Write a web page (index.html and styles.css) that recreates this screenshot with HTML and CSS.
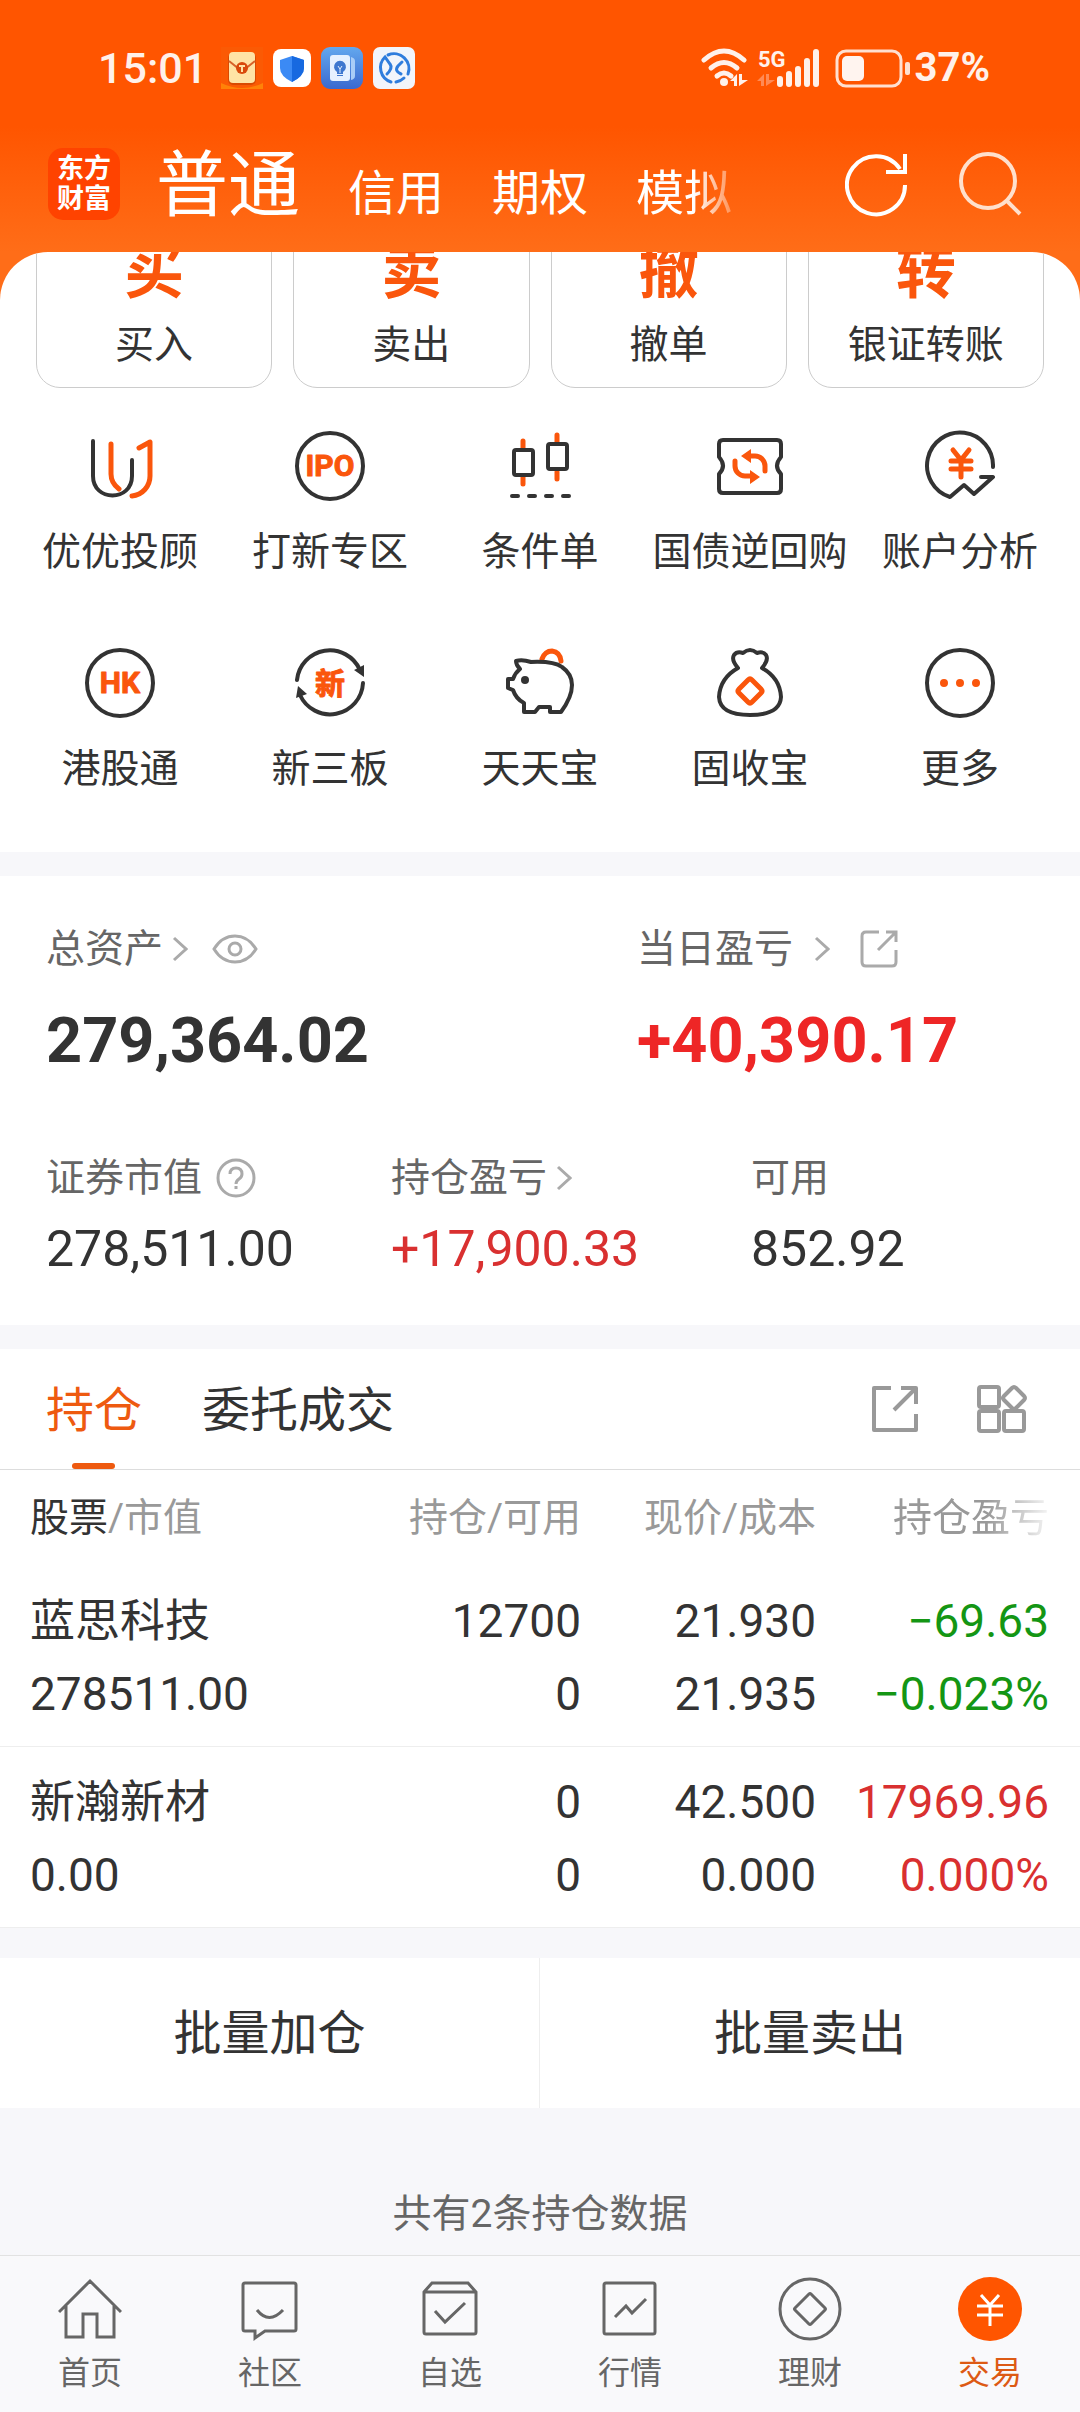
FILE: index.html
```html
<!DOCTYPE html>
<html lang="zh-CN">
<head>
    <meta charset="UTF-8">
    <meta name="viewport" content="width=device-width, initial-scale=1">
    <title>交易 - 普通账户</title>
    <link rel="stylesheet" href="styles.css">
</head>
<body>

    <!-- 状态栏 + 顶部导航 -->
    <header class="top">
        <div class="status-bar">
            <span class="time">15:01</span>
            <div class="status-apps">
                <svg width="42" height="42" viewBox="0 0 42 42">
                    <rect width="42" height="42" fill="#fb5a04"/>
                    <path d="M0 42V36Q21 46 42 36V42z" fill="#ff8208"/>
                    <rect x="7" y="6" width="28" height="32" rx="5" fill="#d94a02"/>
                    <rect x="8" y="5" width="26" height="31" rx="4" fill="#ffe3a5"/>
                    <path d="M8 14l10 8h6l10-8" fill="none" stroke="#d8622a" stroke-width="2"/>
                    <circle cx="21" cy="21" r="6" fill="#d94a0c"/>
                    <path d="M18 19h6M21 19v6" stroke="#ffe3a5" stroke-width="2"/>
                </svg>
                <svg width="38" height="38" viewBox="0 0 38 38">
                    <rect width="38" height="38" rx="8" fill="#fff"/>
                    <path d="M19 7l12 4v8q0 8-12 14Q7 27 7 19v-8z" fill="#3b8af5"/>
                    <path d="M19 7l12 4v8q0 8-12 14z" fill="#1769e0"/>
                </svg>
                <svg width="42" height="42" viewBox="0 0 42 42">
                    <defs>
                        <linearGradient id="bulb" x1="0" y1="0" x2="0" y2="1">
                            <stop offset="0" stop-color="#63a8ee"/>
                            <stop offset="1" stop-color="#3a69cf"/>
                        </linearGradient>
                    </defs>
                    <rect width="42" height="42" rx="9" fill="url(#bulb)"/>
                    <path d="M30 10q4 1 4 4v15q0 3-4 4z" fill="#a9cdf7"/>
                    <rect x="9" y="8" width="20" height="26" rx="3" fill="#e6f1ff"/>
                    <path d="M16 25a6 6 0 1 1 6 0v2h-6zM16 28h6v1h-6z" fill="#3f78cf"/>
                    <path d="M17 19l2 3 2-3M19 22v4" fill="none" stroke="#e6f1ff" stroke-width="1"/>
                </svg>
                <svg width="42" height="42" viewBox="0 0 42 42">
                    <rect width="42" height="42" rx="7" fill="#f2f5fb"/>
                    <path d="M15 8a15 15 0 0 1 20 19M31 31a15 15 0 0 1-8 4M18 35A15 15 0 0 1 12 10l5 7q3 4-3 10" fill="none" stroke="#2f7ddd" stroke-width="3" stroke-linecap="round"/>
                    <path d="M29 15l-4 4q-4 5 3 8" fill="none" stroke="#2f7ddd" stroke-width="3" stroke-linecap="round"/>
                </svg>
            </div>
            <div class="status-right">
                <svg width="120" height="40" viewBox="0 0 120 40" fill="none" stroke="#fff1ea" stroke-linecap="round">
                    <path d="M3 12q20-18 40 0" stroke-width="5"/>
                    <path d="M10 20q13-11 26 0" stroke-width="5"/>
                    <path d="M16 28q7-6 14 0" stroke-width="5"/>
                    <circle cx="23" cy="34" r="4" fill="#fff1ea" stroke="none"/>
                    <path d="M29 33l7-7v12h-3v-5zM38 38V26h3v6h6z" fill="#fff1ea" stroke="none"/>
                    <path d="M56 33l7-7v12h-3v-5zM65 38V26h3v6h6z" fill="#ff8a55" stroke="none"/>
                    <text class="net" x="57" y="19">5G</text>
                    <path d="M79 31v5M88 26v10M97 21v15M106 13v23M115 4v32" stroke-width="6"/>
                </svg>
                <svg class="battery" width="76" height="40" viewBox="0 0 76 40">
                    <rect x="2" y="3" width="64" height="35" rx="9" fill="none" stroke="#ffe0d0" stroke-width="3"/>
                    <rect x="7" y="8" width="22" height="25" rx="5" fill="#fff4ef"/>
                    <rect x="70" y="14" width="5" height="13" rx="2" fill="#ffe0d0"/>
                </svg>
                <span class="percent">37%</span>
            </div>
        </div>
        <div class="title-bar">
            <div class="logo">东方<br>财富</div>
            <nav class="account-tabs">
                <button class="account-tab current">普通</button>
                <button class="account-tab">信用</button>
                <button class="account-tab">期权</button>
                <button class="account-tab fade">模拟</button>
            </nav>
            <div class="title-tools">
                <button aria-label="刷新">
                    <svg width="64" height="66" viewBox="0 0 64 66" fill="none" stroke="#fff" stroke-width="4">
                        <path d="M60 34A29 29 0 1 1 55 18"/>
                        <path d="M60 3V21H41"/>
                    </svg>
                </button>
                <button aria-label="搜索">
                    <svg width="64" height="66" viewBox="0 0 64 66" fill="none" stroke="#ffe0cc" stroke-width="4">
                        <circle cx="30" cy="30" r="27"/>
                        <path d="M48 49l14 14"/>
                    </svg>
                </button>
            </div>
        </div>
    </header>

    <main>
        <!-- 快捷入口 -->
        <div class="panel-wrap">
            <section class="panel">
                <div class="cards">
                    <a href="#" class="card"><b>买</b><span>买入</span></a>
                    <a href="#" class="card"><b>卖</b><span>卖出</span></a>
                    <a href="#" class="card"><b>撤</b><span>撤单</span></a>
                    <a href="#" class="card"><b>转</b><span>银证转账</span></a>
                </div>
                <div class="functions">
                    <a href="#" class="function">
                        <svg class="icon" viewBox="0 0 72 72">
                            <path d="M9 11V46C9 72 48 72 48 46V30"/>
                            <path class="hot" d="M27 14V44q0 9 8 15M55 18L66 12V46a20 20 0 0 1-18 20"/>
                        </svg>
                        <span>优优投顾</span>
                    </a>
                    <a href="#" class="function">
                        <svg class="icon" viewBox="0 0 72 72">
                            <circle cx="36" cy="36" r="33"/>
                            <text x="36" y="46">IPO</text>
                        </svg>
                        <span>打新专区</span>
                    </a>
                    <a href="#" class="function">
                        <svg class="icon" viewBox="0 0 72 72">
                            <path class="hot" d="M19 11v7M19 47v7M53 5v7M53 42v7"/>
                            <rect x="10" y="20" width="19" height="25" rx="2"/>
                            <rect x="44" y="14" width="19" height="25" rx="2"/>
                            <path d="M8 66h6M25 66h6M42 66h6M59 66h6"/>
                        </svg>
                        <span>条件单</span>
                    </a>
                    <a href="#" class="function">
                        <svg class="icon" viewBox="0 0 72 72">
                            <path d="M9 10H63q4 0 4 4V27q-8 9 0 17V59q0 4-4 4H9q-4 0-4-4V44q8-8 0-17V14q0-4 4-4z"/>
                            <path class="hot" d="M35 26H41a10 10 0 0 1 10 10V41M21 31V36a10 10 0 0 0 10 10H37"/>
                            <path class="fill-hot" d="M27 26l10-7v14zM46 47l-10-7v14z"/>
                        </svg>
                        <span>国债逆回购</span>
                    </a>
                    <a href="#" class="function">
                        <svg class="icon" viewBox="0 0 72 72">
                            <path d="M69 37A33 33 0 1 0 26 67L40 55L50 64L69 47H57"/>
                            <path class="hot" d="M29 20l8 10 8-10M37 30V47M27 31H47M27 39H47"/>
                        </svg>
                        <span>账户分析</span>
                    </a>
                    <a href="#" class="function">
                        <svg class="icon" viewBox="0 0 72 72">
                            <circle cx="36" cy="36" r="33"/>
                            <text x="36" y="46">HK</text>
                        </svg>
                        <span>港股通</span>
                    </a>
                    <a href="#" class="function">
                        <svg class="icon" viewBox="0 0 72 72">
                            <path d="M3 33A33 33 0 0 1 66 23M69 36A33 33 0 0 1 6 48"/>
                            <path class="fill-dark" d="M60 23l10-5v12zM2 51l2-12 9 8z"/>
                            <text x="36" y="47">新</text>
                        </svg>
                        <span>新三板</span>
                    </a>
                    <a href="#" class="function">
                        <svg class="icon" viewBox="0 0 72 72">
                            <path class="hot" d="M38 12q3-8 10-8 8 1 9 10"/>
                            <path d="M12 14Q18 12 27 15Q50 14 58 20Q68 27 68 38Q68 50 57 65H46V60H35L31 65H20V56Q12 52 9 43L4 41V32H9Q11 26 16 22Q12 18 12 14z"/>
                            <circle class="fill-dark" cx="21" cy="33" r="4"/>
                        </svg>
                        <span>天天宝</span>
                    </a>
                    <a href="#" class="function">
                        <svg class="icon" viewBox="0 0 72 72">
                            <path d="M24 21Q17 13 20 8Q23 4 29 6Q36 0 43 6Q49 4 52 8Q55 13 48 21Q66 31 67 50Q66 68 36 68T5 50Q6 31 24 21z"/>
                            <path class="hot" d="M34 33q2-2 4 0l9 9q2 2 0 4l-9 9q-2 2-4 0l-9-9q-2-2 0-4z"/>
                        </svg>
                        <span>固收宝</span>
                    </a>
                    <a href="#" class="function">
                        <svg class="icon" viewBox="0 0 72 72">
                            <circle cx="36" cy="36" r="33"/>
                            <path class="fill-hot" d="M16 36a4 4 0 1 0 8 0a4 4 0 1 0-8 0M32 36a4 4 0 1 0 8 0a4 4 0 1 0-8 0M48 36a4 4 0 1 0 8 0a4 4 0 1 0-8 0"/>
                        </svg>
                        <span>更多</span>
                    </a>
                </div>
            </section>
        </div>

        <!-- 资产 -->
        <section class="assets">
            <div class="assets-main">
                <div>
                    <div class="label">总资产
                        <svg class="chevron" viewBox="0 0 16 26"><path d="M2 2l12 11L2 24"/></svg>
                        <svg class="eye" viewBox="0 0 46 32"><path d="M2 16Q10 3 23 3T44 16Q36 29 23 29T2 16z"/><circle cx="23" cy="16" r="6"/></svg>
                    </div>
                    <div class="total">279,364.02</div>
                </div>
                <div>
                    <div class="label">当日盈亏
                        <svg class="chevron far" viewBox="0 0 16 26"><path d="M2 2l12 11L2 24"/></svg>
                        <svg class="share" viewBox="0 0 40 40"><path d="M20 3H7Q3 3 3 7V33Q3 37 7 37H33Q37 37 37 33V21M27 3H37V13M37 3L19 21"/></svg>
                    </div>
                    <div class="total up-bold">+40,390.17</div>
                </div>
            </div>
            <div class="assets-sub">
                <div>
                    <div class="label">证券市值
                        <svg class="help" viewBox="0 0 40 40"><circle cx="20" cy="20" r="18"/><path d="M14 16q0-6 6-6t6 6q0 3-3 5t-3 5M20 28v3"/></svg>
                    </div>
                    <div class="amount">278,511.00</div>
                </div>
                <div>
                    <div class="label">持仓盈亏
                        <svg class="chevron" viewBox="0 0 16 26"><path d="M2 2l12 11L2 24"/></svg>
                    </div>
                    <div class="amount up">+17,900.33</div>
                </div>
                <div>
                    <div class="label">可用</div>
                    <div class="amount">852.92</div>
                </div>
            </div>
        </section>

        <!-- 持仓列表 -->
        <section class="holdings">
            <div class="holding-tabs">
                <button class="holding-tab active">持仓</button>
                <button class="holding-tab">委托成交</button>
                <div class="holding-tools">
                    <button aria-label="分享">
                        <svg width="48" height="48" viewBox="0 0 48 48"><path d="M20 3H3V45H45V29M30 3H45V19M45 3L23 25"/></svg>
                    </button>
                    <button aria-label="布局">
                        <svg width="52" height="50" viewBox="0 0 52 50">
                            <rect x="3" y="3" width="20" height="20" rx="2"/>
                            <rect x="3" y="27" width="20" height="20" rx="2"/>
                            <rect x="28" y="27" width="20" height="20" rx="2"/>
                            <path d="M36 4q2-2 4 0l8 8q2 2 0 4l-8 8q-2 2-4 0l-8-8q-2-2 0-4z"/>
                        </svg>
                    </button>
                </div>
            </div>
            <table>
                <colgroup>
                    <col>
                    <col class="col-count">
                    <col class="col-price">
                    <col class="col-profit">
                </colgroup>
                <thead>
                    <tr>
                        <th><b>股票</b>/市值</th>
                        <th>持仓/可用</th>
                        <th>现价/成本</th>
                        <th><span class="fade-head">持仓盈亏</span></th>
                    </tr>
                </thead>
                <tbody>
                    <tr>
                        <td><span class="stock">蓝思科技</span><br>278511.00</td>
                        <td>12700<br>0</td>
                        <td>21.930<br>21.935</td>
                        <td class="down">−69.63<br>−0.023%</td>
                    </tr>
                    <tr>
                        <td><span class="stock">新瀚新材</span><br>0.00</td>
                        <td>0<br>0</td>
                        <td>42.500<br>0.000</td>
                        <td class="up">17969.96<br>0.000%</td>
                    </tr>
                </tbody>
            </table>
        </section>

        <div class="batch">
            <button>批量加仓</button>
            <button>批量卖出</button>
        </div>

        <p class="count">共有2条持仓数据</p>
    </main>

    <!-- 底部导航 -->
    <nav class="bottom-nav">
        <a href="#">
            <svg viewBox="0 0 64 64"><path d="M1 35L32 4L63 35M8 29V60H25V37H39V60H56V29"/></svg>
            <span>首页</span>
        </a>
        <a href="#">
            <svg viewBox="0 0 64 64"><path d="M7 6H56q2 0 2 2V52q0 2-2 2H27L17 61V54H7q-2 0-2-2V8q0-2 2-2z"/><path d="M19 33q12 15 26 0"/></svg>
            <span>社区</span>
        </a>
        <a href="#">
            <svg viewBox="0 0 64 64"><path d="M6 15L14 6H50L58 15V55q0 2-2 2H8q-2 0-2-2zM6 15H58M17 34L27 45L47 26"/></svg>
            <span>自选</span>
        </a>
        <a href="#">
            <svg viewBox="0 0 64 64"><rect x="6" y="6" width="51" height="51" rx="2"/><path d="M17 40L28 29L34 36L48 22"/></svg>
            <span>行情</span>
        </a>
        <a href="#">
            <svg viewBox="0 0 64 64"><circle cx="32" cy="32" r="30"/><path d="M31 17q1-1 2 0l14 14q1 1 0 2L33 47q-1 1-2 0L17 33q-1-1 0-2z"/></svg>
            <span>理财</span>
        </a>
        <a href="#" class="on">
            <svg viewBox="0 0 64 64"><circle class="disc" cx="32" cy="32" r="32"/><path d="M23 18L32 28L41 18M32 28V49M19 29H45M19 38H45"/></svg>
            <span>交易</span>
        </a>
    </nav>

</body>
</html>
```

FILE: styles.css
```css
* {
    box-sizing: border-box;
}
body {
    margin: 0;
    min-height: 100vh;
    display: flex;
    flex-direction: column;
    background: #f7f7fa;
    color: #333;
    font-family: Roboto, "Noto Sans CJK SC", sans-serif;
    font-size: 39px;
    line-height: 50px;
}
button {
    padding: 0;
    border: 0;
    background: none;
    color: inherit;
    font: inherit;
}
a {
    color: inherit;
    text-decoration: none;
}
svg {
    display: block;
    flex: none;
}

/* 顶部 */
.top {
    padding-bottom: 20px;
    background: linear-gradient(#ff5500 50%, #ff6d18);
    color: #fff;
}
.status-bar {
    display: flex;
    align-items: center;
    height: 136px;
    padding: 0 90px 0 98px;
    color: #fff1ea;
    font-size: 43px;
    font-weight: 500;
}
.status-apps {
    display: flex;
    align-items: center;
    gap: 10px;
    margin-left: 14px;
}
.status-right {
    display: flex;
    align-items: center;
    margin-left: auto;
}
.net {
    fill: #fff1ea;
    stroke: none;
    font-size: 22px;
    font-weight: 700;
}
.battery {
    margin-left: 14px;
}
.percent {
    margin-left: 4px;
    font-size: 40px;
    font-weight: 700;
}
.title-bar {
    display: flex;
    align-items: center;
    height: 96px;
    padding: 0 58px 0 48px;
}
.logo {
    width: 72px;
    height: 72px;
    padding-top: 6px;
    border-radius: 15px;
    background: #ff4300;
    font-size: 27px;
    font-weight: 700;
    line-height: 30px;
    text-align: center;
}
.account-tabs {
    display: flex;
    align-items: baseline;
    gap: 48px;
    margin-left: 36px;
    padding-top: 12px;
}
.account-tab {
    font-size: 48px;
    line-height: 72px;
}
.account-tab.current {
    font-size: 72px;
}
.fade {
    -webkit-mask-image: linear-gradient(90deg, #000 60%, rgba(0, 0, 0, 0.3));
    mask-image: linear-gradient(90deg, #000 60%, rgba(0, 0, 0, 0.3));
}
.title-tools {
    display: flex;
    gap: 49px;
    margin-left: auto;
}

/* 快捷入口 */
.panel-wrap {
    background: linear-gradient(#ff6d18, #ff6d18) no-repeat 0 0 / 100% 60px;
}
.panel {
    overflow: hidden;
    padding: 0 15px 58px;
    border-radius: 48px 48px 0 0;
    background: #fff;
}
.cards {
    display: grid;
    grid-template-columns: repeat(4, 1fr);
    gap: 21px;
    margin: -29px 21px 0;
}
.card {
    display: flex;
    flex-direction: column;
    align-items: center;
    gap: 17px;
    padding: 19px 0 17px;
    border: 1px solid #ccc;
    border-radius: 24px;
}
.card b {
    color: #fa560c;
    font-size: 60px;
    line-height: 60px;
}
.functions {
    display: grid;
    grid-template-columns: repeat(5, 1fr);
    row-gap: 70px;
    margin-top: 42px;
}
.function {
    display: flex;
    flex-direction: column;
    align-items: center;
    gap: 25px;
    white-space: nowrap;
}
.icon {
    width: 72px;
    height: 72px;
    fill: none;
    stroke: #333;
    stroke-width: 4;
    stroke-linecap: round;
    stroke-linejoin: round;
}
.icon .hot {
    stroke: #fa560c;
    stroke-width: 5;
}
.icon .fill-hot {
    fill: #fa560c;
    stroke: none;
}
.icon .fill-dark {
    fill: #333;
    stroke: none;
}
.icon text {
    fill: #fa560c;
    stroke: #fa560c;
    stroke-width: 1;
    font-size: 30px;
    font-weight: 700;
    text-anchor: middle;
}

/* 资产 */
.assets {
    margin: 24px 0;
    padding: 48px 46px;
    background: #fff;
}
.assets-main {
    display: grid;
    grid-template-columns: 591fr 397fr;
    margin-bottom: 76px;
}
.assets-sub {
    display: grid;
    grid-template-columns: 345fr 360fr 283fr;
}
.label {
    display: flex;
    align-items: center;
    color: #666;
}
.label svg {
    fill: none;
    stroke: #aaa;
    stroke-width: 3;
}
.chevron {
    width: 16px;
    height: 26px;
    margin-left: 9px;
}
.chevron.far {
    margin-left: 21px;
}
.eye {
    width: 46px;
    height: 32px;
    margin-left: 24px;
}
.share {
    width: 40px;
    height: 40px;
    margin-left: 29px;
}
.help {
    width: 40px;
    height: 40px;
    margin-left: 14px;
}
.total {
    margin-top: 31px;
    font-size: 63px;
    font-weight: 700;
    line-height: 72px;
}
.amount {
    margin-top: 18px;
    font-size: 50px;
    line-height: 56px;
}
.up {
    color: #d93030;
}
.up-bold {
    color: #ee2626;
}
.down {
    color: #149614;
}

/* 持仓列表 */
.holdings {
    background: #fff;
}
.holding-tabs {
    display: flex;
    gap: 60px;
    height: 121px;
    padding: 0 52px 0 46px;
    border-bottom: 1px solid #ddd;
}
.holding-tab {
    position: relative;
    padding-top: 3px;
    font-size: 48px;
}
.holding-tab.active {
    color: #ee5a10;
}
.holding-tab.active::after {
    content: "";
    position: absolute;
    bottom: 0;
    left: 26px;
    width: 43px;
    height: 6px;
    border-radius: 3px;
    background: #ee5a10;
}
.holding-tools {
    display: flex;
    align-items: center;
    gap: 57px;
    margin-left: auto;
}
.holding-tools svg {
    fill: none;
    stroke: #999;
    stroke-width: 4;
    stroke-linejoin: round;
}
table {
    width: 100%;
    table-layout: fixed;
    border-collapse: collapse;
}
.col-count,
.col-price {
    width: 235px;
}
.col-profit {
    width: 264px;
}
th,
td {
    padding: 0;
    font-weight: 400;
    text-align: right;
    white-space: nowrap;
}
th {
    height: 96px;
    color: #999;
}
th b {
    color: #333;
    font-weight: 400;
}
th:first-child,
td:first-child {
    padding-left: 30px;
    text-align: left;
}
th:last-child,
td:last-child {
    padding-right: 31px;
}
td {
    padding: 19px 0 15px;
    border-bottom: 1px solid #eee;
    font-size: 46px;
    line-height: 73px;
}
.stock {
    font-size: 45px;
}
.fade-head {
    -webkit-mask-image: linear-gradient(90deg, #000 60%, rgba(0, 0, 0, 0.1));
    mask-image: linear-gradient(90deg, #000 60%, rgba(0, 0, 0, 0.1));
}

.batch {
    display: grid;
    grid-template-columns: 1fr 1fr;
    margin-top: 30px;
    background: #fff;
}
.batch button {
    height: 150px;
    padding-top: 2px;
    font-size: 48px;
}
.batch button:first-child {
    border-right: 1px solid #eee;
}
.count {
    margin: 81px 0 16px;
    color: #666;
    text-align: center;
}

/* 底部导航 */
.bottom-nav {
    display: grid;
    grid-template-columns: repeat(6, 1fr);
    margin-top: auto;
    padding: 21px 0 19px;
    border-top: 1px solid #e2e2e2;
    background: #f9f9fb;
    color: #666;
    font-size: 32px;
    line-height: 40px;
}
.bottom-nav a {
    display: flex;
    flex-direction: column;
    align-items: center;
    gap: 12px;
}
.bottom-nav svg {
    width: 64px;
    height: 64px;
    fill: none;
    stroke: #666;
    stroke-width: 3;
}
.bottom-nav .on {
    color: #dd5a14;
}
.bottom-nav .on svg {
    stroke: #fff;
}
.bottom-nav .disc {
    fill: #ff5500;
    stroke: none;
}
```
